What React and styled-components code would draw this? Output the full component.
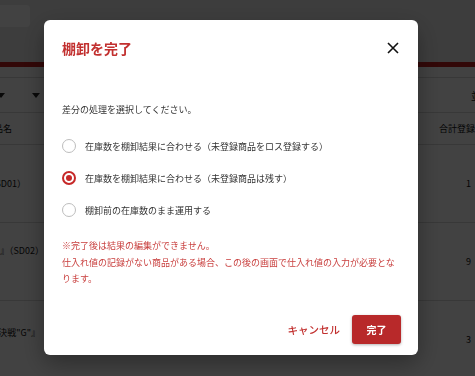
import React, { useState } from 'react';
import styled, { createGlobalStyle } from 'styled-components';

const GlobalStyle = createGlobalStyle`
  html, body {
    margin: 0;
    padding: 0;
    background: #ffffff;
    font-family: "Noto Sans CJK JP", "Noto Sans", sans-serif;
  }
`;

// ---- page behind the dialog ----

const Page = styled.div`
  width: 475px;
  height: 376px;
  overflow: hidden;
  background: #ffffff;
  color: #111;
  font-size: 9px;
`;

const TopBar = styled.div`
  height: 62px;
  background: #ececec;
  padding-top: 5px;
  box-sizing: border-box;
`;

const SearchBox = styled.div`
  margin-left: -20px;
  width: 50px;
  height: 22px;
  background: #ffffff;
  border-radius: 4px;
`;

const RedBar = styled.div`
  height: 5px;
  background: #c01f1f;
`;

const Strip = styled.div`
  height: 10px;
  border-bottom: 1px solid #d8d8d8;
`;

const Toolbar = styled.div`
  height: 34px;
  display: flex;
  align-items: center;
  gap: 27px;
  border-bottom: 1px solid #d8d8d8;
  margin-left: -3px;
`;

const Caret = styled.svg`
  width: 8px;
  height: 5px;
  fill: #222;
`;

const ToolbarEnd = styled.span`
  margin-left: auto;
  margin-right: -6px;
  font-size: 10px;
`;

const Row = styled.div`
  height: ${p => p.$h}px;
  display: flex;
  align-items: center;
  border-bottom: 1px solid #d8d8d8;
  box-sizing: border-box;
`;

const NameCell = styled.div`
  width: 44px;
  overflow: hidden;
  display: flex;
  justify-content: flex-end;
  white-space: nowrap;
  padding-right: ${p => p.$pad}px;
  margin-bottom: ${p => p.$lift}px;
  box-sizing: border-box;
`;

const NumCell = styled.div`
  margin-left: auto;
  width: 40px;
  overflow: hidden;
  display: flex;
  justify-content: flex-end;
  white-space: nowrap;
  padding-right: ${p => p.$pad}px;
  box-sizing: border-box;
`;

// ---- dialog ----

const Overlay = styled.div`
  position: fixed;
  inset: 0;
  background: rgba(0, 0, 0, 0.74);
  display: flex;
  align-items: flex-start;
`;

const Dialog = styled.div`
  margin: 20px 0 0 44px;
  width: 374px;
  background: #ffffff;
  border-radius: 6px;
  box-shadow: 0 8px 24px rgba(0, 0, 0, 0.35);
  color: #333;
`;

const Header = styled.div`
  display: flex;
  align-items: center;
  justify-content: space-between;
  padding: 18px 19px 0 18px;
`;

const Title = styled.h2`
  margin: 0;
  font-size: 14px;
  line-height: 20px;
  font-weight: 700;
  color: #c2302f;
`;

const CloseButton = styled.button`
  border: none;
  background: none;
  padding: 0;
  width: 12px;
  height: 12px;
  display: flex;
  cursor: pointer;
`;

const Body = styled.div`
  padding: 0 18px;
`;

const Lead = styled.p`
  margin: 44px 0 0;
  font-size: 9px;
  line-height: 16px;
  color: #333;
`;

const RadioList = styled.div`
  margin-top: 12px;
  display: flex;
  flex-direction: column;
`;

const RadioRow = styled.label`
  height: 32px;
  display: flex;
  align-items: center;
  gap: 9px;
  font-size: 9px;
  color: #333;
  cursor: pointer;
`;

const RadioMark = styled.span`
  width: 14px;
  height: 14px;
  border-radius: 50%;
  box-sizing: border-box;
  border: ${p => (p.$checked ? '2px solid #c62828' : '1.5px solid #bdbdbd')};
  display: flex;
  align-items: center;
  justify-content: center;
  &::after {
    content: '';
    width: 6px;
    height: 6px;
    border-radius: 50%;
    background: ${p => (p.$checked ? '#c62828' : 'transparent')};
  }
`;

const Note = styled.p`
  margin: 12px 0 0;
  font-size: 9px;
  line-height: 16.5px;
  color: #c9403f;
`;

const Footer = styled.div`
  display: flex;
  justify-content: flex-end;
  align-items: center;
  gap: 12px;
  padding: 27px 17px 11px;
`;

const CancelButton = styled.button`
  border: none;
  background: none;
  padding: 0;
  font-family: inherit;
  font-size: 10.5px;
  font-weight: 500;
  color: #c2302f;
  cursor: pointer;
`;

const DoneButton = styled.button`
  width: 49px;
  height: 29px;
  border: none;
  border-radius: 3px;
  background: #b8292a;
  color: #ffffff;
  font-family: inherit;
  font-size: 10px;
  font-weight: 700;
  box-shadow: 0 1px 3px rgba(0, 0, 0, 0.3);
  cursor: pointer;
`;

const options = [
  '在庫数を棚卸結果に合わせる（未登録商品をロス登録する）',
  '在庫数を棚卸結果に合わせる（未登録商品は残す）',
  '棚卸前の在庫数のまま運用する',
];

const rows = [
  { name: '収納ボックス（SD01）', pad: 18, lift: 0, qty: '1' },
  { name: '『グランドシリーズ』（SD02）', pad: 0, lift: 22, qty: '9' },
  { name: '『頂上大決戦"G"』', pad: 4, lift: 14, qty: '3' },
];

function CaretDown() {
  return (
    <Caret viewBox="0 0 8 5">
      <path d="M0 0h8L4 5z" />
    </Caret>
  );
}

export default function App() {
  const [choice, setChoice] = useState(1);

  return (
    <>
      <GlobalStyle />
      <Page>
        <TopBar>
          <SearchBox />
        </TopBar>
        <RedBar />
        <Strip />
        <Toolbar>
          <CaretDown />
          <CaretDown />
          <ToolbarEnd>並</ToolbarEnd>
        </Toolbar>
        <Row $h={32}>
          <NameCell $pad={32} $lift={0}>品名</NameCell>
          <NumCell $pad={0}>合計登録</NumCell>
        </Row>
        {rows.map(r => (
          <Row $h={78} key={r.qty}>
            <NameCell $pad={r.pad} $lift={r.lift}>{r.name}</NameCell>
            <NumCell $pad={4}>{r.qty}</NumCell>
          </Row>
        ))}
      </Page>

      <Overlay>
        <Dialog>
          <Header>
            <Title>棚卸を完了</Title>
            <CloseButton aria-label="close">
              <svg width="12" height="12" viewBox="0 0 12 12">
                <path d="M1 1L11 11M11 1L1 11" stroke="#111" strokeWidth="1.6" />
              </svg>
            </CloseButton>
          </Header>
          <Body>
            <Lead>差分の処理を選択してください。</Lead>
            <RadioList>
              {options.map((label, i) => (
                <RadioRow key={i} onClick={() => setChoice(i)}>
                  <RadioMark $checked={choice === i} />
                  {label}
                </RadioRow>
              ))}
            </RadioList>
            <Note>
              ※完了後は結果の編集ができません。
              <br />
              仕入れ値の記録がない商品がある場合、この後の画面で仕入れ値の入力が必要となります。
            </Note>
          </Body>
          <Footer>
            <CancelButton>キャンセル</CancelButton>
            <DoneButton>完了</DoneButton>
          </Footer>
        </Dialog>
      </Overlay>
    </>
  );
}
